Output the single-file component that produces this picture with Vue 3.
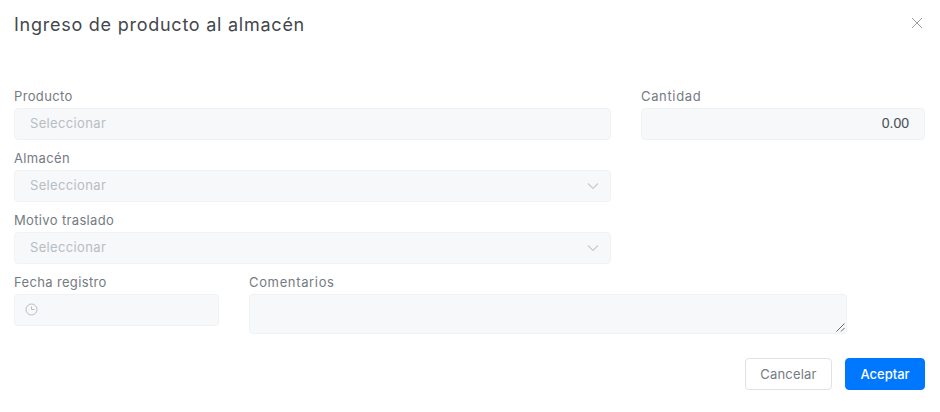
<script setup>
const selects = [
  { label: 'Producto', arrow: false },
  { label: 'Almacén', arrow: true },
  { label: 'Motivo traslado', arrow: true },
]
</script>

<template>
  <div class="modal">
    <header class="head">
      <h1 class="title">Ingreso de producto al almacén</h1>
      <svg class="close" width="12" height="12" viewBox="0 0 12 12" aria-label="Cerrar">
        <path d="M1 1l10 10M11 1L1 11" />
      </svg>
    </header>

    <div class="top">
      <div class="col-left">
        <div v-for="s in selects" :key="s.label" class="field">
          <label class="label">{{ s.label }}</label>
          <div class="control select">
            <span class="placeholder">Seleccionar</span>
            <svg v-if="s.arrow" class="chev" width="12" height="8" viewBox="0 0 12 8">
              <path d="M1 1.5l5 5 5-5" />
            </svg>
          </div>
        </div>
      </div>
      <div class="col-right">
        <div class="field">
          <label class="label wide">Cantidad</label>
          <div class="control number">0.00</div>
        </div>
      </div>
    </div>

    <div class="bottom">
      <div class="field date">
        <label class="label">Fecha registro</label>
        <div class="control dateinput">
          <svg class="clock" width="13" height="13" viewBox="0 0 13 13">
            <circle cx="6.5" cy="6.5" r="5.5" />
            <path d="M6.5 3.5v3h3" />
          </svg>
        </div>
      </div>
      <div class="field comments">
        <label class="label wide">Comentarios</label>
        <div class="control area">
          <svg class="grip" width="9" height="9" viewBox="0 0 9 9">
            <path d="M0.5 8.5l8-8M5 8.5l3.5-3.5" />
          </svg>
        </div>
      </div>
    </div>

    <footer class="foot">
      <button class="btn cancel">Cancelar</button>
      <button class="btn ok">Aceptar</button>
    </footer>
  </div>
</template>

<style>
html, body { margin: 0; background: #fff; }
</style>

<style scoped>
.modal {
  width: 940px;
  height: 412px;
  box-sizing: border-box;
  padding: 12px 15px 0 14px;
  font-family: Inter, "Open Sans", "Liberation Sans", sans-serif;
  background: #fff;
  overflow: hidden;
}
.head {
  display: flex;
  justify-content: space-between;
  align-items: center;
  height: 25px;
}
.title {
  margin: 0;
  font-size: 18px;
  font-weight: 400;
  letter-spacing: 0.75px;
  line-height: 25px;
  color: #43474c;
}
.close { margin-right: 2px; margin-top: -3px; }
.close path { stroke: #9aa0a6; stroke-width: 1; fill: none; }
.top {
  display: flex;
  justify-content: space-between;
  margin-top: 50px;
}
.col-left { width: 597px; display: flex; flex-direction: column; gap: 9px; }
.col-right { width: 284px; }
.field { display: flex; flex-direction: column; }
.label {
  font-size: 13px;
  letter-spacing: 0.35px;
  line-height: 18px;
  height: 20px;
  margin-bottom: 1px;
  color: #757b82;
}
.wide { letter-spacing: 0.65px; }
.control {
  box-sizing: border-box;
  height: 32px;
  background: #f6f8fa;
  border: 1px solid #f0f3f5;
  border-radius: 4px;
  display: flex;
  align-items: center;
  font-size: 13px;
}
.select { padding: 0 11px 2px 15px; justify-content: space-between; }
.placeholder { color: #b8bdc3; letter-spacing: 0.35px; }
.chev { margin-top: 2px; }
.chev path { stroke: #c8ccd0; stroke-width: 1.2; fill: none; }
.number {
  justify-content: flex-end;
  padding: 0 15px 2px 0;
  color: #495057;
  font-family: "Liberation Sans", sans-serif;
  font-size: 14px;
}
.bottom {
  display: flex;
  margin-top: 9px;
  gap: 30px;
}
.date { width: 205px; }
.dateinput { padding: 0 0 2px 10px; }
.clock circle, .clock path { stroke: #b8bdc3; stroke-width: 1; fill: none; }
.comments { width: 598px; }
.area {
  height: 40px;
  position: relative;
}
.grip { position: absolute; right: 1px; bottom: 1px; }
.grip path { stroke: #555; stroke-width: 0.9; fill: none; }
.foot {
  display: flex;
  justify-content: flex-end;
  gap: 13px;
  margin-top: 24px;
}
.btn {
  box-sizing: border-box;
  height: 32px;
  border-radius: 4px;
  font-family: inherit;
  font-size: 13px;
  padding: 0;
}
.cancel {
  width: 87px;
  background: #fff;
  border: 1px solid #dee2e6;
  color: #757b82;
  letter-spacing: 0.2px;
}
.ok {
  width: 80px;
  background: #0077ff;
  border: 1px solid #0077ff;
  color: #fff;
  font-weight: 500;
}
</style>
